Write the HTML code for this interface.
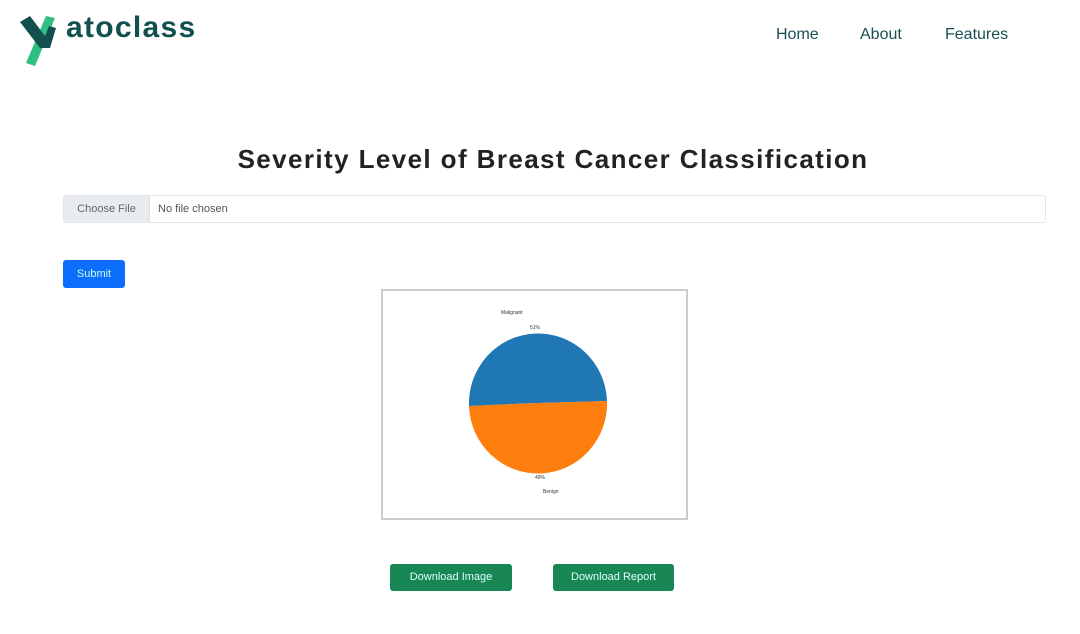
<!DOCTYPE html>
<html><head><meta charset="utf-8"><style>
body{margin:0;width:1080px;height:634px;background:#fff;font-family:"Liberation Sans",sans-serif;position:relative;overflow:hidden}
.a{position:absolute}
.nav{top:26px;font-size:16px;color:#184f52}
.btn{position:absolute;background:#198754;color:#dff;font-size:11px;border-radius:3px;text-align:center;line-height:27px;height:27px}
</style></head><body>
<svg class="a" style="left:18px;top:12px" width="52" height="56" viewBox="0 0 52 56">
<path d="M28 4 L37 6 L17 54 L8 51 Z" fill="#2fbf83"/>
<path d="M2 10 L12 4 L27 24 L31 14 L38 16 L32 36 L22 36 Z" fill="#12504f"/>
</svg>
<div class="a" style="left:66px;top:11px;font-size:30px;font-weight:bold;color:#12504f;letter-spacing:1.3px">atoclass</div>
<div class="a nav" style="left:776px">Home</div>
<div class="a nav" style="left:860px">About</div>
<div class="a nav" style="left:945px">Features</div>
<div class="a" style="left:0;width:1106px;top:144px;text-align:center;font-size:26px;font-weight:bold;color:#222;letter-spacing:1.4px">Severity Level of Breast Cancer Classification</div>
<div class="a" style="left:63px;top:195px;width:981px;height:26px;border:1px solid #e3e6ea;border-radius:3px;font-size:11px;color:#555">
<div style="position:absolute;left:0;top:0;width:85px;height:26px;background:#e9ecef;border-right:1px solid #dde;line-height:26px;text-align:center;color:#666">Choose File</div>
<div style="position:absolute;left:94px;line-height:26px">No file chosen</div></div>
<div class="a" style="left:63px;top:260px;width:62px;height:28px;background:#0d6efd;border-radius:3px;color:#cfe;font-size:11px;line-height:28px;text-align:center">Submit</div>
<div class="a" style="left:381px;top:289px;width:303px;height:227px;border:2px solid #ccc;background:#fff"></div>
<svg class="a" style="left:383px;top:291px" width="303" height="227">
<path d="M155 112 L86 115 A69 70 0 0 1 224 110 Z" fill="#1f77b4"/>
<path d="M155 112 L224 110 A69 70 0 0 1 86 115 Z" fill="#ff7f0e"/>
<text x="118" y="23" font-size="5" fill="#333">Malignant</text>
<text x="147" y="38" font-size="5" fill="#333">51%</text>
<text x="152" y="188" font-size="5" fill="#333">49%</text>
<text x="160" y="202" font-size="5" fill="#333">Benign</text>
</svg>
<div class="btn" style="left:390px;top:564px;width:122px">Download Image</div>
<div class="btn" style="left:553px;top:564px;width:121px">Download Report</div>
</body></html>
